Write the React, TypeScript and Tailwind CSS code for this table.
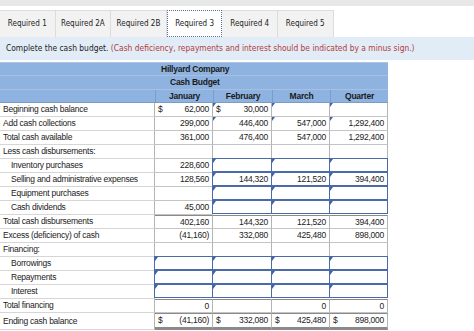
import React from "react";

type Cell = {
  v?: string;
  d?: boolean;
  m?: boolean;
  inp?: boolean;
};

type Row = {
  label: string;
  indent?: boolean;
  cells: Cell[];
  topDark?: boolean;
  last?: boolean;
};

const E: Cell = {};
const I: Cell = { inp: true, m: true };

const rows: Row[] = [
  {
    label: "Beginning cash balance",
    cells: [{ v: "62,000", d: true }, { v: "30,000", d: true, m: true }, { m: true }, { m: true }],
  },
  {
    label: "Add cash collections",
    cells: [{ v: "299,000" }, { v: "446,400", m: true }, { v: "547,000", m: true }, { v: "1,292,400", m: true }],
  },
  {
    label: "Total cash available",
    cells: [{ v: "361,000" }, { v: "476,400" }, { v: "547,000" }, { v: "1,292,400" }],
  },
  { label: "Less cash disbursements:", cells: [E, E, E, E] },
  { label: "Inventory purchases", indent: true, cells: [{ v: "228,600" }, I, I, I] },
  {
    label: "Selling and administrative expenses",
    indent: true,
    cells: [
      { v: "128,560" },
      { v: "144,320", inp: true, m: true },
      { v: "121,520", inp: true, m: true },
      { v: "394,400", inp: true, m: true },
    ],
  },
  { label: "Equipment purchases", indent: true, cells: [E, I, I, I] },
  { label: "Cash dividends", indent: true, cells: [{ v: "45,000" }, I, I, I] },
  {
    label: "Total cash disbursements",
    topDark: true,
    cells: [{ v: "402,160" }, { v: "144,320" }, { v: "121,520" }, { v: "394,400" }],
  },
  {
    label: "Excess (deficiency) of cash",
    cells: [{ v: "(41,160)" }, { v: "332,080" }, { v: "425,480" }, { v: "898,000" }],
  },
  { label: "Financing:", cells: [E, E, E, E] },
  { label: "Borrowings", indent: true, cells: [I, I, I, I] },
  { label: "Repayments", indent: true, cells: [I, I, I, I] },
  { label: "Interest", indent: true, cells: [I, I, I, I] },
  {
    label: "Total financing",
    topDark: true,
    cells: [{ v: "0" }, E, { v: "0" }, { v: "0" }],
  },
  {
    label: "Ending cash balance",
    topDark: true,
    last: true,
    cells: [
      { v: "(41,160)", d: true },
      { v: "332,080", d: true },
      { v: "425,480", d: true },
      { v: "898,000", d: true },
    ],
  },
];

const tabs = ["Required 1", "Required 2A", "Required 2B", "Required 3", "Required 4", "Required 5"];

const SANS = "'Liberation Sans', Arial, sans-serif";
const VERD = "'DejaVu Sans Condensed', 'DejaVu Sans', Verdana, sans-serif";

function Marker() {
  return (
    <span className="absolute left-0 top-0 w-0 h-0 border-t-[4px] border-t-[#3f63a6] border-r-[3px] border-r-transparent" />
  );
}

function NumCell({ c, row }: { c: Cell; row: Row }) {
  const base =
    "relative h-[14px] flex items-center justify-between px-[3px] text-[8.5px] tracking-[-0.25px] text-[#222] leading-none";
  const border = c.inp
    ? "border-[1.5px] border-[#4a6aa8] -mt-px -ml-px"
    : `border-r border-b ${row.last ? "border-b-[3px] border-b-[#8a8a8a]" : "border-b-[#c4c4c4]"} border-r-[#b4b4b4]`;
  const top = row.topDark && !c.inp ? "border-t border-t-[#8a8a8a]" : "";
  return (
    <div className={`${base} ${border} ${top} ${row.last ? "h-[17px]" : ""}`}>
      {c.m && <Marker />}
      <span>{c.d ? "$" : ""}</span>
      <span>{c.v ?? ""}</span>
    </div>
  );
}

export default function App() {
  return (
    <div className="w-[474px] h-[331px] bg-white overflow-hidden" style={{ fontFamily: SANS }}>
      <div className="h-[6px] bg-[#e8e8e8]" />
      <div className="h-[4px]" />
      <div className="flex h-[27px]" style={{ fontFamily: VERD }}>
        {tabs.map((t, i) => (
          <div
            key={t}
            className={`w-[55.6px] flex items-center justify-center text-[8px] text-[#222] ${
              i === 3
                ? "bg-white border border-dotted border-[#5c6f96]"
                : "bg-[#f2f2f2] border-t border-r border-[#dcdcdc]"
            }`}
          >
            {t}
          </div>
        ))}
      </div>
      <div
        className="h-[23px] bg-[#e1ecf7] flex items-center pl-[6px] text-[8.4px] text-[#222]"
        style={{ fontFamily: VERD }}
      >
        <span>Complete the cash budget.&nbsp;</span>
        <span className="text-[#b23b3b]">
          (Cash deficiency, repayments and interest should be indicated by a minus sign.)
        </span>
      </div>
      <div className="h-[2px]" />
      <div className="w-[388px] grid grid-cols-[155px_58px_59px_58px_58px]">
        <div className="col-span-5 h-[14px] bg-[#8eb3e0] border-t border-[#b0c4dc] border-b border-b-[#a9c0dc] flex items-center">
          <span className="ml-[161px] text-[8.5px] tracking-[-0.25px] font-bold text-[#1a1a1a]">Hillyard Company</span>
        </div>
        <div className="col-span-5 h-[14px] bg-[#8eb3e0] border-b border-[#a9c0dc] flex items-center">
          <span className="ml-[170px] text-[8.5px] tracking-[-0.25px] font-bold text-[#1a1a1a]">Cash Budget</span>
        </div>
        <div className="h-[13px] bg-[#8eb3e0] border-b border-[#7d9cc4]" />
        {["January", "February", "March", "Quarter"].map((m) => (
          <div
            key={m}
            className="h-[13px] bg-[#8eb3e0] border-b border-l border-[#7d9cc4] flex items-center justify-center text-[8.5px] tracking-[-0.25px] font-bold text-[#1a1a1a]"
          >
            {m}
          </div>
        ))}
        {rows.map((r) => (
          <React.Fragment key={r.label}>
            <div
              className={`h-[14px] flex items-center border-r border-r-[#b4b4b4] border-b border-b-[#d6d6d6] text-[8.5px] tracking-[-0.25px] text-[#222] whitespace-nowrap ${
                r.indent ? "pl-[11px]" : "pl-[3px]"
              } ${r.last ? "h-[17px] items-start pt-[2px]" : ""}`}
            >
              {r.label}
            </div>
            {r.cells.map((c, j) => (
              <NumCell key={j} c={c} row={r} />
            ))}
          </React.Fragment>
        ))}
      </div>
    </div>
  );
}
